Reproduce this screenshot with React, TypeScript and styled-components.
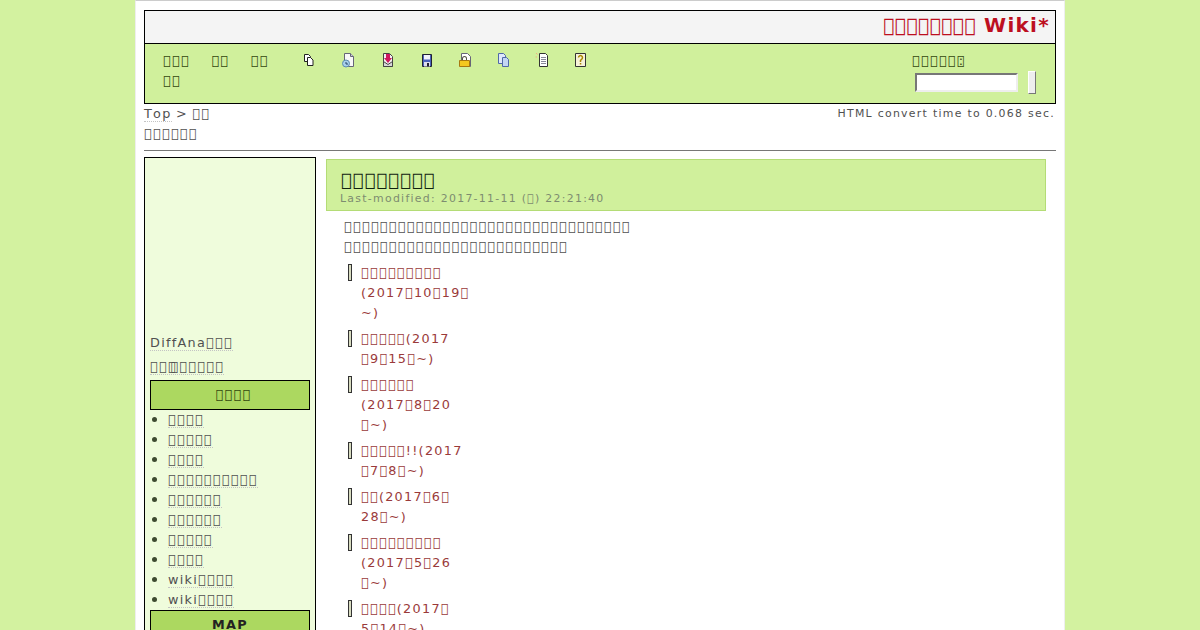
import React from "react";
import styled, { createGlobalStyle } from "styled-components";

// the reference shows its Japanese text as missing-glyph boxes, so private-use code points stand in
const tofu = (n: number) => "\uE000".repeat(n);

const Global = createGlobalStyle`
  html, body { margin: 0; height: 630px; overflow: hidden; background: #d3f2a0; }
  body {
    font-family: "DejaVu Sans", sans-serif;
    font-size: 12.8px;
    line-height: 20px;
    letter-spacing: 1.28px;
    font-kerning: none;
    color: #505050;
  }
  ul { list-style: none; margin: 0; padding: 0; }
`;

const Page = styled.div`
  width: 912px;
  height: 630px;
  overflow: hidden;
  margin: 0 auto;
  padding: 9px 8px 0;
  background: #fff;
  border: 1px solid #eee;
  border-top: 1px solid #ccc;
`;

const Header = styled.header`
  border: 1px solid #000;
`;

const SiteTitle = styled.h1`
  margin: 0;
  height: 32px;
  padding-right: 5px;
  background: #f4f4f4;
  border-bottom: 1px solid #000;
  color: #bd0f1f;
  font-size: 20px;
  line-height: 29px;
  text-align: right;
`;

const SiteTitleBoxes = styled.span`
  font-size: 19px;
  font-weight: normal;
  letter-spacing: 0.2px;
  margin-right: 8px;
`;

const Nav = styled.nav`
  display: flex;
  height: 59px;
  padding: 7px 18px 0;
  box-sizing: border-box;
  background: #d0f09c;
  color: #33470f;
`;

const NavLinks = styled.div`
  display: flex;
  flex-wrap: wrap;
  align-content: flex-start;
  gap: 0 21.5px;
  width: 120px;
`;

const Icons = styled.div`
  display: flex;
  gap: 22.9px;
  margin: 1px 0 0 18px;
`;

const Search = styled.form`
  margin: 0 0 0 auto;
  width: 125px;
`;

const Colon = styled.span`
  margin-left: -7px;
`;

const SearchRow = styled.div`
  display: flex;
  align-items: center;
  gap: 10px;
  margin: 0 0 0 3px;
`;

const SearchInput = styled.input`
  width: 103px;
  height: 19px;
  box-sizing: border-box;
  padding: 0;
  background: #fff;
  border: 2px solid;
  border-color: #777 #eee #eee #777;
`;

const SearchButton = styled.button`
  width: 8px;
  height: 23px;
  padding: 0;
  background: #eee;
  border: 1px solid;
  border-color: #fff #777 #777 #fff;
`;

const TopRow = styled.div`
  display: flex;
  justify-content: space-between;
  word-spacing: -1px;
`;

const Time = styled.div`
  margin-right: 1px;
  font-size: 10.92px;
  line-height: 19px;
  word-spacing: 0;
`;

const Link = styled.a`
  border-bottom: 1px dotted #c4c4c4;
`;

const Rule = styled.hr`
  margin: 6px 0 6px;
  height: 1px;
  border: 0;
  background: #777;
`;

const Columns = styled.div`
  display: flex;
  gap: 10px;
`;

const Sidebar = styled.aside`
  flex: none;
  width: 160px;
  height: 520px;
  padding: 175px 5px 0;
  background: #effcdc;
  border: 1px solid #000;
`;

const SideLine = styled.div`
  margin-bottom: ${(p: { $gap: number }) => p.$gap}px;
`;

const Overlap = styled.span`
  margin-left: -6.5px;
`;

const BoxTitle = styled.div<{ $bold?: boolean; $shift?: number }>`
  height: 28px;
  padding-left: ${(p) => p.$shift ?? 0}px;
  background: #acd860;
  border: 1px solid #000;
  color: ${(p) => (p.$bold ? "#222" : "#33470f")};
  font-weight: ${(p) => (p.$bold ? "bold" : "normal")};
  line-height: 28px;
  text-align: center;
`;

const SideList = styled.ul`
  margin: 0;
`;

const SideItem = styled.li`
  position: relative;
  padding-left: 18px;
  &::before {
    content: "";
    position: absolute;
    left: 2px;
    top: 7px;
    width: 5px;
    height: 5px;
    border-radius: 50%;
    background: #3d4a30;
  }
`;

const Main = styled.main`
  flex: 1;
  padding: 2px 10px 0 0;
`;

const TitleBox = styled.div`
  height: 50px;
  padding-left: 14px;
  background: #d0f09c;
  border: 1px solid #b4dc76;
`;

const PageTitle = styled.h2`
  margin: 0;
  padding-top: 10px;
  color: #121;
  font-size: 17.6px;
  font-weight: normal;
  line-height: 20px;
`;

const Modified = styled.div`
  margin-left: -1px;
  color: #7d8c70;
  font-size: 10.92px;
  line-height: 17px;
`;

const Paragraph = styled.p`
  margin: 6px 0 6px 18px;
`;

const EntryList = styled.ul`
  padding-left: 35px;
`;

const Entry = styled.li`
  position: relative;
  margin-bottom: 6px;
  color: #9a3a3a;
  &::before {
    content: "";
    position: absolute;
    left: -13px;
    top: 1px;
    width: 2px;
    height: 15px;
    background: #d8dcc0;
    border: 1px solid #333;
  }
`;

const Svg = ({ children }: { children: React.ReactNode }) => (
  <svg width="16" height="16" viewBox="0 0 16 16">{children}</svg>
);

const page = "M4.500 1.500h6l3 3v10h-9z";

const toolIcons = [
  <Svg key="copy">
    <path d="M3.500 2.500h4l2 2v5h-6z" fill="#fff" stroke="#222" />
    <path d="M6.500 5.500h3l2.500 2.500v5.500H6.500z" fill="#fff" stroke="#222" />
  </Svg>,
  <Svg key="history">
    <path d={page} fill="#f8f8f8" stroke="#667" />
    <path d="M10.500 1.500v3h3" fill="#ccd" stroke="#667" />
    <circle cx="6" cy="11.500" r="3.500" fill="#a8d0ec" stroke="#5a8cb0" />
    <path d="M6 10v2h2" fill="none" stroke="#246" />
  </Svg>,
  <Svg key="receive">
    <path d={page} fill="#f4f0f0" stroke="#444" />
    <path d="M4.500 9.500l4.500 3 4.500-3v5h-9z" fill="#d8d8d8" stroke="#444" />
    <path d="M7 2h4v4h2l-4 5-4-5h2z" fill="#d01860" />
  </Svg>,
  <Svg key="save">
    <path d="M4.500 2.500h9v12h-9z" fill="#4a62bc" stroke="#223" />
    <path d="M6 3h6v4.500H6z" fill="#f0f2fa" />
    <path d="M6 10h6v4.500H6z" fill="#dde" />
    <path d="M9 11h2v3.500H9z" fill="#223" />
  </Svg>,
  <Svg key="lock">
    <path d={page} fill="#fff" stroke="#667" />
    <path d="M5 6.500a2.500 2.500 0 0 1 5 0V9H9V6.500a1.500 1.500 0 0 0-3 0V9H5z" fill="#554" />
    <path d="M2.500 8.500h10v6h-10z" fill="#f4c820" stroke="#a87810" />
  </Svg>,
  <Svg key="pages">
    <path d="M3.500 1.500h5l2 2v8h-7z" fill="#dfe8fa" stroke="#5068a8" />
    <path d="M7.500 5.500h4l2 2v7h-6z" fill="#c4d6f4" stroke="#5068a8" />
  </Svg>,
  <Svg key="new">
    <path d="M5.500 1.500h6l2 2v11h-8z" fill="#fff" stroke="#333" />
    <path d="M7 5.500h5M7 7.500h5M7 9.500h5M7 11.500h5" stroke="#889" />
    <path d="M2 1l1.500 1.500M1.500 5H3" stroke="#f0b080" />
  </Svg>,
  <Svg key="help">
    <path d="M2.500 1.500h10v13h-10z" fill="#f6f2d8" stroke="#333" />
    <path d="M5.500 5.500a2 2 0 1 1 3 1.800L7.500 8.500v1.500" fill="none" stroke="#a88800" strokeWidth="1.500" />
    <path d="M6.800 11h1.500v1.500H6.800z" fill="#a88800" />
  </Svg>,
];

const sideItems = [
  tofu(4),
  tofu(5),
  tofu(4),
  tofu(10),
  tofu(6),
  tofu(6),
  tofu(5),
  tofu(4),
  "wiki" + tofu(4),
  "wiki" + tofu(4),
];

const t = "\uE000";
const entries = [
  [tofu(9), `(2017${t}10${t}19${t}`, "~)"],
  [`${tofu(5)}(2017`, `${t}9${t}15${t}~)`],
  [tofu(6), `(2017${t}8${t}20`, `${t}~)`],
  [`${tofu(5)}!!(2017`, `${t}7${t}8${t}~)`],
  [`${tofu(2)}(2017${t}6${t}`, `28${t}~)`],
  [tofu(9), `(2017${t}5${t}26`, `${t}~)`],
  [`${tofu(4)}(2017${t}`, `5${t}14${t}~)`],
];

export default function App() {
  return (
    <>
      <Global />
      <Page>
        <Header>
          <SiteTitle>
            <SiteTitleBoxes>{tofu(8)}</SiteTitleBoxes>Wiki*
          </SiteTitle>
          <Nav>
            <NavLinks>
              <a>{tofu(3)}</a>
              <a>{tofu(2)}</a>
              <a>{tofu(2)}</a>
              <a>{tofu(2)}</a>
            </NavLinks>
            <Icons>{toolIcons}</Icons>
            <Search>
              {tofu(6)}
              <Colon>:</Colon>
              <SearchRow>
                <SearchInput />
                <SearchButton type="button" />
              </SearchRow>
            </Search>
          </Nav>
        </Header>
        <TopRow>
          <div>
            <Link>Top</Link> &gt; {tofu(2)}
          </div>
          <Time>HTML convert time to 0.068 sec.</Time>
        </TopRow>
        <div>{tofu(6)}</div>
        <Rule />
        <Columns>
          <Sidebar>
            <SideLine $gap={4}>
              <Link>DiffAna{tofu(3)}</Link>
            </SideLine>
            <SideLine $gap={3}>
              <Link>
                {tofu(3)}
                <Overlap>{t}</Overlap>
                {tofu(5)}
              </Link>
            </SideLine>
            <BoxTitle $shift={7}>{tofu(4)}</BoxTitle>
            <SideList>
              {sideItems.map((item, i) => (
                <SideItem key={i}>
                  <Link>{item}</Link>
                </SideItem>
              ))}
            </SideList>
            <BoxTitle $bold>MAP</BoxTitle>
          </Sidebar>
          <Main>
            <TitleBox>
              <PageTitle>{tofu(8)}</PageTitle>
              <Modified>Last-modified: 2017-11-11 ({t}) 22:21:40</Modified>
            </TitleBox>
            <Paragraph>
              {tofu(32)}
              <br />
              {tofu(25)}
            </Paragraph>
            <EntryList>
              {entries.map((lines, i) => (
                <Entry key={i}>
                  {lines.map((line, j) => (
                    <div key={j}>{line}</div>
                  ))}
                </Entry>
              ))}
            </EntryList>
          </Main>
        </Columns>
      </Page>
    </>
  );
}
